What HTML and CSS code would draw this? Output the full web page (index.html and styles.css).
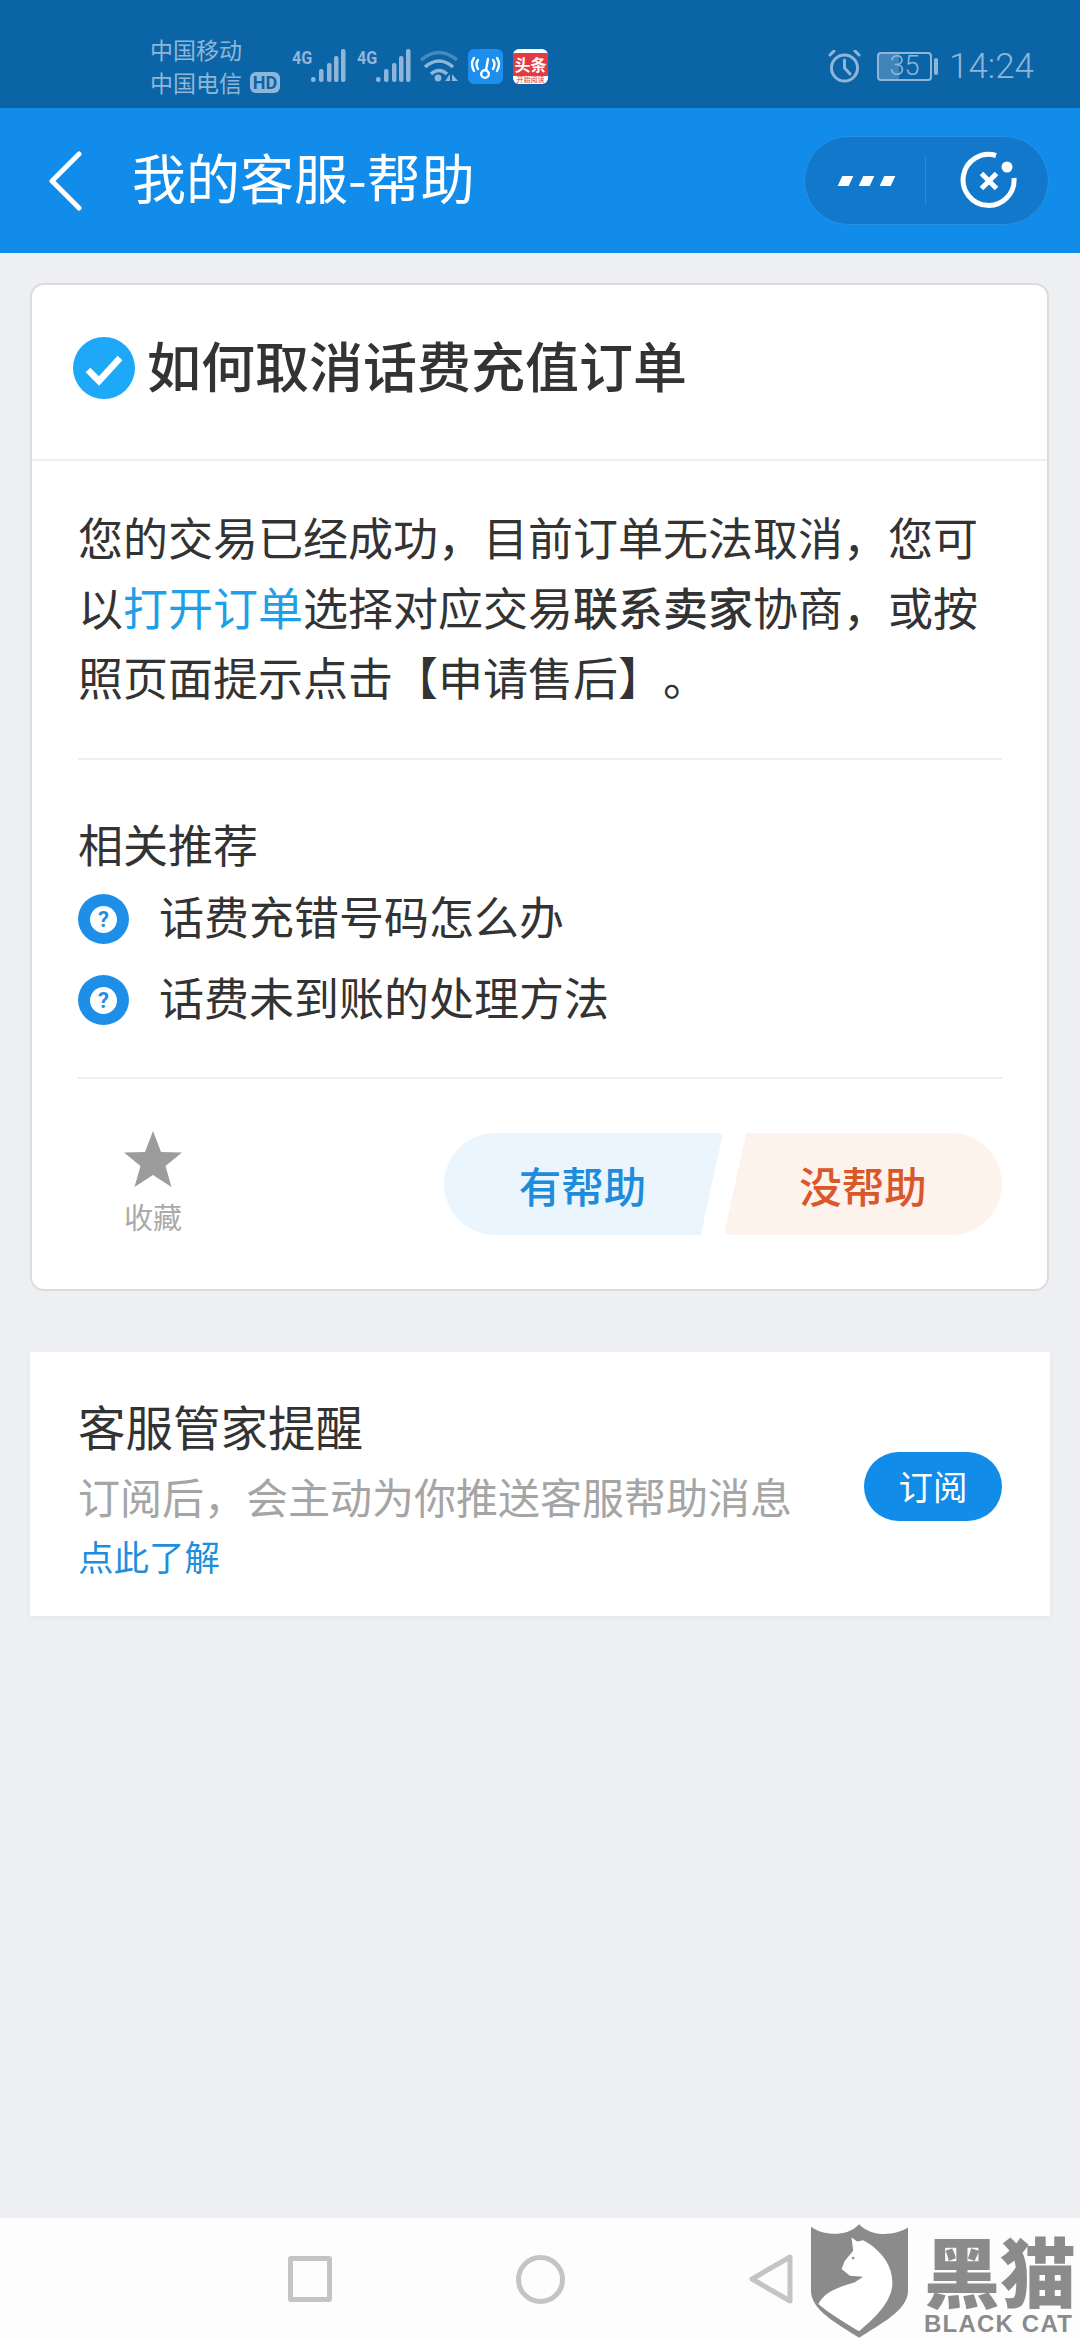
FILE: index.html
```html
<!DOCTYPE html>
<html lang="zh-CN">
<head>
    <meta charset="UTF-8">
    <meta name="viewport" content="width=device-width, initial-scale=1.0">
    <title>我的客服-帮助</title>
    <link rel="stylesheet" href="styles.css">
</head>
<body>
    <div class="status-bar">
        <div class="carriers">
            <div>中国移动</div>
            <div class="carrier-row">中国电信<span class="hd">HD</span></div>
        </div>
        <div class="signal">
            <span class="net">4G</span>
            <svg width="35" height="33" viewBox="0 0 35 33" fill="#8fb6d8"><rect x="0" y="28" width="4.5" height="5" rx="2"/><rect x="8" y="20" width="4.5" height="13" rx="2"/><rect x="16" y="14" width="4.5" height="19" rx="2"/><rect x="23" y="7" width="4.5" height="26" rx="2"/><rect x="30" y="0" width="4.5" height="33" rx="2"/></svg>
        </div>
        <div class="signal">
            <span class="net">4G</span>
            <svg width="35" height="33" viewBox="0 0 35 33" fill="#8fb6d8"><rect x="0" y="28" width="4.5" height="5" rx="2"/><rect x="8" y="20" width="4.5" height="13" rx="2"/><rect x="16" y="14" width="4.5" height="19" rx="2"/><rect x="23" y="7" width="4.5" height="26" rx="2"/><rect x="30" y="0" width="4.5" height="33" rx="2"/></svg>
        </div>
        <svg class="wifi" width="39" height="33" viewBox="0 0 39 33" fill="none" stroke="#8fb6d8" stroke-width="3.6">
            <path d="M1 11Q19 -4 37 11" opacity="0.45"/>
            <path d="M5 18Q19 6 33 18"/>
            <path d="M11 25Q19 18 27 25"/>
            <circle cx="18" cy="29" r="3.4" fill="#8fb6d8" stroke="none"/>
            <path d="M30 25L25 32H30ZM32 25V32L38 32Z" fill="#8fb6d8" stroke="none"/>
        </svg>
        <div class="app-icon app-wifi">
            <svg width="35" height="35" viewBox="0 0 35 35" fill="none" stroke="#fff" stroke-width="2.4" stroke-linecap="round">
                <circle cx="17" cy="25" r="3.8"/>
                <path d="M18 21L20 10"/>
                <path d="M10 11Q7 15 10 20M6 9Q2 15 6 22M25 11Q28 15 25 20M29 9Q33 15 29 22"/>
            </svg>
        </div>
        <div class="app-icon app-news">
            <div class="news-band">头条</div>
            <div class="news-foot">开始阅读</div>
        </div>
        <div class="status-right">
            <svg width="33" height="33" viewBox="0 0 33 33" fill="none" stroke="#8fb6d8" stroke-width="3" stroke-linecap="round">
                <circle cx="16.5" cy="18" r="13"/>
                <path d="M16.5 10V18L22 24"/>
                <path d="M2 5L6 1M31 5L27 1"/>
            </svg>
            <div class="battery">
                <div class="battery-box"><span class="battery-fill"></span><span class="battery-num">35</span></div>
                <span class="battery-tip"></span>
            </div>
            <span class="clock">14:24</span>
        </div>
    </div>

    <div class="top-bar">
        <svg class="back" width="34" height="60" viewBox="0 0 34 60" fill="none" stroke="#fff" stroke-width="5" stroke-linecap="round" stroke-linejoin="round"><path d="M30 3L3 30L30 57"/></svg>
        <h1 class="page-title">我的客服-帮助</h1>
        <div class="capsule">
            <div class="capsule-more">
                <span></span><span></span><span></span>
            </div>
            <div class="capsule-close">
                <svg width="60" height="60" viewBox="0 0 60 60" fill="none" stroke="#fff" stroke-width="5">
                    <path d="M37 4.5A25.5 25.5 0 1 0 55 27"/>
                    <path d="M22.500 22.500L37.500 37.500M37.500 22.500L22.500 37.500"/>
                    <circle cx="48" cy="16" r="5.500" fill="#fff" stroke="none"/>
                </svg>
            </div>
        </div>
    </div>

    <main class="content">
        <section class="card">
            <div class="card-head">
                <svg width="62" height="62" viewBox="0 0 62 62"><circle cx="31" cy="31" r="31" fill="#1ea9f8"/><path d="M15 33L26 44L47 21" fill="none" stroke="#fff" stroke-width="6.500"/></svg>
                <h2 class="question">如何取消话费充值订单</h2>
            </div>
            <div class="card-body">
                <p class="answer">您的交易已经成功，目前订单无法取消，您可以<span class="link">打开订单</span>选择对应交易<b class="strong">联系卖家</b>协商，或按照页面提示点击【申请售后】。</p>
                <hr class="line">
                <h3 class="related-title">相关推荐</h3>
                <ul class="related">
                    <li><span class="help-icon"><span class="help-mark">?</span></span>话费充错号码怎么办</li>
                    <li><span class="help-icon"><span class="help-mark">?</span></span>话费未到账的处理方法</li>
                </ul>
                <hr class="line">
                <div class="feedback">
                    <div class="favorite">
                        <svg width="58" height="56" viewBox="0 0 58 56" fill="#9c9c9c"><path d="M29 0L37 21L58 21.500L41.500 35L47.500 56L29 44L10.500 56L16.500 35L0 21.500L21 21Z"/></svg>
                        <span>收藏</span>
                    </div>
                    <div class="vote">
                        <button class="vote-btn vote-yes">有帮助</button>
                        <button class="vote-btn vote-no">没帮助</button>
                    </div>
                </div>
            </div>
        </section>

        <section class="notice">
            <div class="notice-text">
                <div class="notice-title">客服管家提醒</div>
                <div class="notice-desc">订阅后，会主动为你推送客服帮助消息</div>
                <div class="notice-more">点此了解</div>
            </div>
            <button class="subscribe">订阅</button>
        </section>
    </main>

    <div class="nav-bar">
        <span class="nav-square"></span>
        <span class="nav-circle"></span>
        <svg width="44" height="50" viewBox="0 0 44 50" fill="none" stroke="#c4c4c4" stroke-width="5" stroke-linejoin="round"><path d="M41 3V47L3 25Z"/></svg>
    </div>

    <div class="watermark">
        <svg width="98" height="114" viewBox="30 30 295 342">
            <path d="M33 38C70 65 140 70 178 30C215 70 285 65 325 40V230C325 290 240 330 178 372C115 330 33 290 33 230Z" fill="#8b8b8b"/>
            <path d="M155 70L172 82L190 78C250 110 280 160 278 210C275 270 215 320 178 352C140 330 90 300 55 270C75 230 130 215 165 205L190 188L150 185L125 165L135 140L160 110Z" fill="#fff"/>
            <circle cx="160" cy="132" r="4" fill="#8b8b8b"/>
        </svg>
        <div class="wm-text">
            <div class="wm-cn">黑猫</div>
            <div class="wm-en">BLACK CAT</div>
        </div>
    </div>
</body>
</html>
```

FILE: styles.css
```css
* { box-sizing: border-box; }
html, body { margin: 0; padding: 0; }
body {
    position: relative;
    width: 1080px;
    height: 2340px;
    display: flex;
    flex-direction: column;
    overflow: hidden;
    background-color: #eeeff3;
    font-family: "Noto Sans CJK SC", "Noto Sans", sans-serif;
    color: #333;
    text-spacing-trim: space-all;
}

/* status bar */
.status-bar {
    height: 108px;
    flex-shrink: 0;
    display: flex;
    align-items: center;
    padding: 0 46px 0 150px;
    background-color: #0b64a6;
    color: #8fb6d8;
}
.carriers { width: 131px; margin: 24px 11px 0 0; font-size: 23px; line-height: 33px; }
.carrier-row { display: flex; align-items: center; white-space: nowrap; }
.hd {
    margin-left: 8px;
    width: 30px;
    height: 21px;
    border-radius: 6px;
    background-color: #8fb6d8;
    color: #0b64a6;
    font: bold 18px/21px "Roboto", sans-serif;
    text-align: center;
}
.signal { width: 53px; height: 33px; margin: 23px 12px 0 0; display: flex; align-items: flex-start; }
.signal svg { flex-shrink: 0; margin-left: -1px; }
.net {
    width: 20px;
    flex-shrink: 0;
    font: bold 19px/17px "Roboto", sans-serif;
    transform: scaleX(0.85);
    transform-origin: left top;
}
.wifi { margin: 23px 9px 0 -2px; flex-shrink: 0; }
.app-icon { width: 35px; height: 35px; border-radius: 6px; flex-shrink: 0; margin-top: 25px; overflow: hidden; }
.app-wifi { margin-right: 10px; background-color: #1c8ef0; }
.app-news { background-color: #fff; padding-top: 4px; text-align: center; }
.news-band {
    height: 23px;
    background-color: #e33b41;
    color: #fff;
    font-size: 16px;
    font-weight: bold;
    line-height: 23px;
}
.news-foot { font-size: 7px; line-height: 7px; color: #d8353b; white-space: nowrap; }
.status-right { margin-left: auto; margin-top: 25px; display: flex; align-items: center; }
.battery { display: flex; align-items: center; margin-left: 16px; }
.battery-box {
    position: relative;
    width: 55px;
    height: 29px;
    border: 2px solid #8fb6d8;
    border-radius: 4px;
    text-align: center;
    font: 300 27px/25px "Roboto", sans-serif;
}
.battery-fill { position: absolute; left: 0; top: 0; bottom: 0; width: 40%; background-color: rgba(143, 182, 216, 0.4); }
.battery-num { position: relative; }
.battery-tip { width: 4px; height: 17px; margin-left: 2px; border-radius: 2px; background-color: #8fb6d8; }
.clock { margin-left: 11px; font: 300 35px/40px "Roboto", sans-serif; }

/* title bar */
.top-bar {
    height: 145px;
    flex-shrink: 0;
    display: flex;
    align-items: center;
    padding: 0 31px 0 49px;
    background-color: #118ceb;
    color: #fff;
}
.back { flex-shrink: 0; }
.page-title { margin: 0 0 8px 49px; font-size: 54px; font-weight: 400; line-height: 70px; }
.capsule {
    margin-left: auto;
    width: 245px;
    height: 89px;
    display: flex;
    align-items: center;
    border: 1px solid #2b90e0;
    border-radius: 45px;
    background-color: #1278cb;
}
.capsule-more {
    width: 121px;
    height: 48px;
    display: flex;
    align-items: center;
    justify-content: center;
    gap: 10px;
    padding-left: 3px;
    border-right: 1px solid #2b8adb;
}
.capsule-more span { width: 11px; height: 10px; background-color: #fff; transform: skewX(-25deg); }
.capsule-close { flex: 1; display: flex; justify-content: center; padding-left: 3px; }

/* content */
.content { flex: 1; padding-top: 30px; }
.card {
    margin: 0 31px 0 30px;
    height: 1008px;
    border: 2px solid #dcdcdc;
    border-radius: 14px;
    background-color: #fff;
}
.card-head {
    height: 176px;
    display: flex;
    align-items: center;
    gap: 12px;
    padding: 0 0 8px 41px;
    border-bottom: 2px solid #eee;
}
.question { margin: 0 0 6px; font-size: 54px; font-weight: 500; line-height: 70px; }
.card-body { padding: 41px 45px 0 46px; }
.answer { margin: 0; font-size: 45px; line-height: 70px; }
.link { color: #1e9fe8; }
.strong { font-weight: 500; }
.line { height: 2px; margin: 46px 0 0; border: 0; background-color: #eee; }
.related-title { margin: 54px 0 0; font-size: 45px; font-weight: 400; line-height: 60px; }
.related { list-style: none; margin: 17px 0 0; padding: 0; }
.related li { height: 50px; margin-bottom: 31px; display: flex; align-items: center; font-size: 45px; line-height: 50px; }
.related li:last-child { margin-bottom: 55px; }
.help-icon {
    width: 51px;
    height: 50px;
    margin: 6px 30px 0 0;
    display: flex;
    align-items: center;
    justify-content: center;
    border-radius: 50%;
    background-color: #1e8fe8;
}
.help-mark {
    width: 27px;
    height: 27px;
    border-radius: 50%;
    background-color: #fff;
    color: #1e8fe8;
    font: bold 22px/27px "Roboto", sans-serif;
    text-align: center;
}
.feedback { display: flex; align-items: flex-start; padding-top: 52px; }
.favorite { width: 150px; display: flex; flex-direction: column; align-items: center; font-size: 29px; line-height: 40px; color: #aaa; }
.favorite svg { margin-bottom: 9px; }
.vote { margin: 2px 0 0 auto; display: flex; }
.vote-btn {
    width: 279px;
    height: 102px;
    padding: 0;
    border: 0;
    font-family: inherit;
    font-size: 42.5px;
    font-weight: 500;
}
.vote-yes {
    border-radius: 51px 6px 6px 51px;
    background-color: #eaf5fd;
    color: #1f8bdb;
    clip-path: polygon(0 0, 100% 0, 92% 100%, 0 100%);
    padding-right: 2px;
}
.vote-no {
    margin-left: 1px;
    width: 278px;
    border-radius: 6px 51px 51px 6px;
    background-color: #fef2ed;
    color: #d9582a;
    clip-path: polygon(8% 0, 100% 0, 100% 100%, 0 100%);
}

/* notice */
.notice {
    margin: 61px 30px 0;
    height: 264px;
    display: flex;
    align-items: flex-start;
    padding: 44px 48px 0 48px;
    background-color: #fff;
    box-shadow: 0 2px 6px rgba(0, 0, 0, 0.04);
}
.notice-text { flex: 1; }
.notice-title { font-size: 47.500px; line-height: 60px; }
.notice-desc { margin-top: 14px; font-size: 42px; line-height: 52px; color: #a5a5a5; }
.notice-more { margin-top: 12px; font-size: 35.500px; line-height: 44px; color: #1e8fdc; }
.subscribe {
    width: 138px;
    height: 69px;
    margin-top: 56px;
    padding: 0 0 4px;
    border: 0;
    border-radius: 35px;
    background-color: #128ce9;
    color: #fff;
    font-family: inherit;
    font-size: 34.500px;
}

/* bottom bar */
.nav-bar {
    height: 122px;
    flex-shrink: 0;
    display: flex;
    align-items: center;
    justify-content: center;
    gap: 184px;
    background-color: #fdfdfd;
}
.nav-square { width: 44px; height: 46px; border: 5px solid #c4c4c4; border-radius: 3px; }
.nav-circle { width: 49px; height: 49px; border: 5px solid #c4c4c4; border-radius: 50%; }

/* watermark sits over the bottom bar */
.watermark { position: absolute; left: 810px; top: 2224px; display: flex; gap: 16px; color: #8b8b8b; }
.wm-text { width: 152px; padding-top: 3px; }
.wm-cn { font-size: 76px; font-weight: 900; line-height: 84px; white-space: nowrap; }
.wm-en { font: bold 24px/26px "Liberation Sans", sans-serif; letter-spacing: 1.200px; white-space: nowrap; }
```
